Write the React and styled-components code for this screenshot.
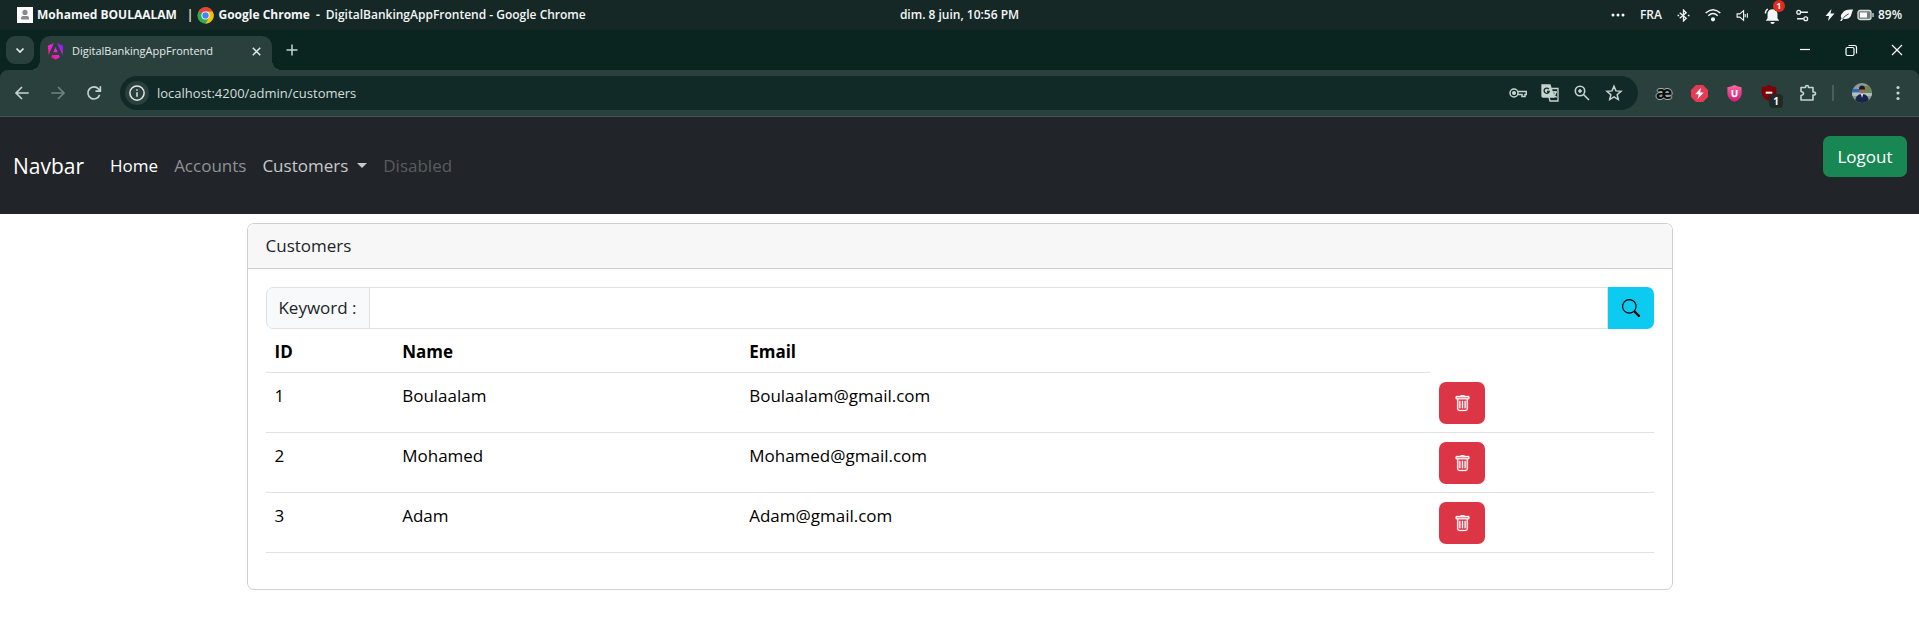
import React from 'react';
import styled, { createGlobalStyle, css } from 'styled-components';
import { BsSearch, BsTrash } from 'react-icons/bs';

const Global = createGlobalStyle`
  *, *::before, *::after { box-sizing: border-box; }
  body {
    margin: 0;
    background: #fff;
    color: #212529;
    font-family: "Open Sans", "Noto Sans", sans-serif;
    font-size: 17px;
    line-height: 26px;
  }
  button, input { font: inherit; }
  svg { display: block; flex: none; }
`;

const Row = css`
  display: flex;
  align-items: center;
`;

/* ---------- desktop status bar ---------- */

const StatusBar = styled.header`
  display: grid;
  grid-template-columns: 1fr auto 1fr;
  align-items: center;
  height: 30px;
  padding: 0 17px;
  background: #152826;
  color: #f4f6f6;
  font-size: 12px;
  font-weight: 600;
  line-height: 16px;
  white-space: nowrap;
`;

const StatusLeft = styled.div`
  ${Row}
  gap: 4px;
`;

const StatusTitle = styled.span`
  margin-right: ${(p) => (p.$wide ? 6 : 2)}px;
  font-weight: 700;
`;

const StatusRight = styled.div`
  ${Row}
  justify-content: flex-end;
  gap: 15px;
`;

const Battery = styled.div`
  ${Row}
  gap: 4px;
`;

const BellWrap = styled.span`
  position: relative;
`;

const BellBadge = styled.span`
  position: absolute;
  top: -7px;
  right: -4px;
  width: 12px;
  height: 12px;
  border-radius: 50%;
  background: #e02b20;
  font-size: 9px;
  font-weight: 700;
  line-height: 12px;
  text-align: center;
`;

/* ---------- browser tabs ---------- */

const TabStrip = styled.div`
  display: flex;
  align-items: flex-end;
  height: 40px;
  padding: 0 14px 0 6px;
  background: #0a2420;
`;

const TabSearch = styled.button`
  ${Row}
  justify-content: center;
  width: 28px;
  height: 28px;
  margin: 0 6px 6px 0;
  padding: 0;
  border: 0;
  border-radius: 9px;
  background: #29403c;
  color: #e3ebe9;
`;

const Tab = styled.div`
  ${Row}
  position: relative;
  width: 232px;
  height: 34px;
  padding: 0 11px 4px 7px;
  border-radius: 10px 10px 0 0;
  background: #29403c;
  color: #e3ebe9;
  font-size: 11px;
  line-height: 16px;
  &::before, &::after {
    content: "";
    position: absolute;
    bottom: 0;
    width: 10px;
    height: 10px;
  }
  &::before { left: -10px; background: radial-gradient(circle at 0 0, transparent 10px, #29403c 10px); }
  &::after { right: -10px; background: radial-gradient(circle at 100% 0, transparent 10px, #29403c 10px); }
`;

const TabTitle = styled.span`
  flex: 1;
  margin-left: 8px;
`;

const IconButton = styled.button`
  ${Row}
  justify-content: center;
  flex: none;
  width: ${(p) => p.$size || 16}px;
  height: ${(p) => p.$size || 16}px;
  padding: 0;
  border: 0;
  background: none;
  color: ${(p) => p.$color || '#c6d4d0'};
  opacity: ${(p) => (p.disabled ? 0.45 : 1)};
`;

const NewTab = styled.div`
  margin: 0 auto 12px 12px;
`;

const WindowControls = styled.div`
  ${Row}
  gap: 30px;
  margin-bottom: 12px;
`;

/* ---------- browser toolbar ---------- */

const ToolbarBacking = styled.div`
  background: #0a2420;
`;

const Toolbar = styled.div`
  ${Row}
  height: 47px;
  padding: 0 13px;
  border-bottom: 1px solid #4a5351;
  border-radius: 8px 8px 0 0;
  background: #29403c;
`;

const History = styled.div`
  ${Row}
  gap: 18px;
  margin-right: 17px;
`;

const AddressBar = styled.div`
  ${Row}
  flex: 1;
  height: 34px;
  padding: 0 15px 0 5px;
  border-radius: 17px;
  background: #122a27;
`;

const SiteInfo = styled.button`
  ${Row}
  justify-content: center;
  width: 24px;
  height: 24px;
  padding: 0;
  border: 0;
  border-radius: 50%;
  background: #29403c;
  color: #dfe8e6;
`;

const Url = styled.input`
  flex: 1;
  min-width: 0;
  height: 24px;
  padding: 0;
  margin-left: 8px;
  border: 0;
  outline: 0;
  background: none;
  color: #d5dedc;
  font-size: 13px;
`;

const AddressActions = styled.div`
  ${Row}
  gap: 14px;
`;

const Extensions = styled.div`
  ${Row}
  gap: 18px;
  margin-left: 17px;
`;

const Shield = styled.span`
  position: relative;
  width: 20px;
`;

const CountBadge = styled.span`
  position: absolute;
  left: 8px;
  top: 9px;
  width: 14px;
  height: 14px;
  border-radius: 4px;
  background: #202b29;
  color: #fff;
  font-size: 10px;
  font-weight: 700;
  line-height: 14px;
  text-align: center;
`;

const Divider = styled.span`
  width: 2px;
  height: 16px;
  margin-left: -3px;
  background: #46605b;
`;

/* ---------- application ---------- */

const Navbar = styled.nav`
  display: flex;
  align-items: center;
  min-height: 97px;
  padding: 9px 12px 9px 13px;
  background: #212529;
`;

const Brand = styled.a`
  margin-right: 18px;
  color: #fff;
  font-size: 21px;
  line-height: 32px;
  text-decoration: none;
`;

const NavList = styled.ul`
  ${Row}
  margin: 0;
  padding: 0;
  list-style: none;
`;

const NavLink = styled.a`
  ${Row}
  padding: 9px 8px;
  color: ${(p) => p.$color};
  text-decoration: none;
`;

const Caret = styled.span`
  margin-left: 9px;
  border-top: 5px solid;
  border-right: 5px solid transparent;
  border-left: 5px solid transparent;
`;

const Button = styled.button`
  ${Row}
  justify-content: center;
  min-width: ${(p) => (p.$icon ? 46 : 84)}px;
  height: ${(p) => (p.$icon ? 42 : 41)}px;
  padding: 0;
  border: 0;
  border-radius: ${(p) => (p.$attached ? '0 7px 7px 0' : '7px')};
  background: ${(p) => p.$bg};
  color: ${(p) => p.$color || '#fff'};
`;

const LogoutSlot = styled.div`
  align-self: flex-start;
  margin: 10px 0 0 auto;
`;

const Container = styled.main`
  max-width: 1452px;
  margin: 9px auto 0;
  padding: 0 13px;
`;

const Card = styled.section`
  border: 1px solid #cfd0d1;
  border-radius: 7px;
  background: #fff;
  overflow: hidden;
`;

const CardHeader = styled.div`
  padding: 9px 18px;
  border-bottom: 1px solid #cfd0d1;
  background: #f7f7f7;
`;

const CardBody = styled.div`
  padding: 18px;
`;

const InputGroup = styled.form`
  display: flex;
`;

const InputLabel = styled.label`
  ${Row}
  justify-content: center;
  width: 104px;
  border: 1px solid #dee2e6;
  border-radius: 7px 0 0 7px;
  background: #f8f9fa;
`;

const TextInput = styled.input`
  flex: 1;
  min-width: 0;
  margin-left: -1px;
  padding: 0 13px;
  border: 1px solid #dee2e6;
  outline: 0;
`;

const Table = styled.table`
  width: 100%;
  margin-bottom: 18px;
  border-collapse: separate;
  border-spacing: 0;
  table-layout: fixed;
  color: #000;
  line-height: 28px;
`;

const Column = styled.col`
  width: ${(p) => p.$share};
`;

const cell = css`
  padding: 9px 9px 8px;
  border-bottom: 1px solid #dee2e6;
  text-align: left;
  vertical-align: top;
`;

const HeadCell = styled.th`
  ${cell}
  padding-bottom: 6px;
  font-weight: 700;
`;

const Cell = styled.td`
  ${cell}
`;

/* ---------- icons ---------- */

const Icon = ({ size = 16, box = 24, children, fill = 'none', w = 2, ...rest }) => (
  <svg
    width={size} height={size} viewBox={`0 0 ${box} ${box}`} fill={fill}
    stroke={fill === 'none' ? 'currentColor' : 'none'} strokeWidth={w} aria-hidden="true" {...rest}
  >
    {children}
  </svg>
);

const UserTile = () => (
  <Icon size={16} box={16} fill="#8a8a8a">
    <rect width="16" height="16" fill="#fff" />
    <circle cx="8" cy="5.4" r="2.6" />
    <path d="M4 12.5V11q0-2 2-2h4q2 0 2 2v1.500z" />
  </Icon>
);

const ChromeLogo = () => (
  <Icon size={17} box={48} fill="#fff">
    <circle cx="24" cy="24" r="23" fill="#34a853" />
    <path d="M24 24 4.100 12.500A23 23 0 0 1 43.900 12.500L24 13z" fill="#ea4335" />
    <path d="M24 1A23 23 0 0 1 44 12.500H24z" fill="#ea4335" />
    <path d="M44 12.500A23 23 0 0 1 24 47L34 30 24 12.500z" fill="#fbbc04" />
    <circle cx="24" cy="24" r="11.500" />
    <circle cx="24" cy="24" r="9" fill="#4285f4" />
  </Icon>
);

const AngularLogo = () => (
  <Icon size={17} box={24} fill="#f0c">
    <defs>
      <linearGradient id="angular" x1="0" y1="1" x2="1" y2="0">
        <stop offset="0" stopColor="#ff0a5c" />
        <stop offset=".5" stopColor="#f024d8" />
        <stop offset="1" stopColor="#6a1bff" />
      </linearGradient>
    </defs>
    <path fill="url(#angular)" d="M14.200 0 22.800 4l-.9 13.400zM9.800 0 1.200 4l.9 13.400zM18 20l-6 3.800L6 20l1.200-3h9.600zM8.800 13.200 12 5.500l3.200 7.700z" />
  </Icon>
);

const Chevron = () => <Icon size={12} w={3.5}><path d="m5 9 7 7 7-7" /></Icon>;
const Close = () => <Icon size={9} w={4}><path d="M2 2l20 20M22 2 2 22" /></Icon>;
const Plus = () => <Icon size={12} w={3}><path d="M12 1v22M1 12h22" /></Icon>;
const Back = () => <Icon size={18} w={2.2}><path d="M21 12H4M12 4l-8 8 8 8" /></Icon>;
const Forward = () => <Icon size={18} w={2.2}><path d="M3 12h17M12 4l8 8-8 8" /></Icon>;
const Reload = () => <Icon size={18} w={2.2}><path d="M19.500 14.500A8 8 0 1 1 18 6.700l2 2.300M20.500 3v6.500H14" /></Icon>;
const Info = () => <Icon size={18} w={2}><circle cx="12" cy="12" r="9.5" /><path d="M12 11v6M12 7v2" /></Icon>;

const MoreDots = () => (
  <Icon size={14} box={14} fill="currentColor"><circle cx="2" cy="7" r="1.5" /><circle cx="7" cy="7" r="1.5" /><circle cx="12" cy="7" r="1.5" /></Icon>
);
const Bluetooth = () => (
  <Icon size={13} w={2.4}><path d="M5 7l12 10-5 5V2l5 5L5 17" /><path d="M1 12h3M20 12h3" /></Icon>
);
const Wifi = () => (
  <Icon size={16} w={2.2}><path d="M1 9q11-10 22 0M5 13q7-6.500 14 0" /><circle cx="12" cy="18.500" r="2" fill="currentColor" /></Icon>
);
const Speaker = () => <Icon size={13} w={2}><path d="M2 9h5l7-6v18l-7-6H2zM17 9v6M21 8v8" /></Icon>;
const Bell = () => (
  <Icon size={17} fill="currentColor"><path d="M12 3a7 7 0 0 0-7 7v6l-2.500 3.500h19L19 16v-6a7 7 0 0 0-7-7zM9 21a3 3 0 0 0 6 0zM1 9q0-5 4-7l1 1.500Q3 5 3 9z" /></Icon>
);
const Sliders = () => <Icon size={13} w={2.4}><circle cx="5" cy="6" r="3.5" /><path d="M9 6h13M2 18h12" /><circle cx="18" cy="18" r="3.5" /></Icon>;
const Bolt = () => <Icon size={12} fill="currentColor"><path d="M15 0 3 14h7L8 24 21 9h-8z" /></Icon>;
const Leaf = () => <Icon size={13} fill="currentColor"><path d="M24 1Q9 0 5 7-1 12 3 17l-3 5h3l3-4q10 2 14-5 2-6 4-12z" /><path d="M5 18q4-6 11-9" stroke="#152826" strokeWidth="1.500" /></Icon>;
const BatteryIcon = () => (
  <svg width="17" height="12" viewBox="0 0 17 12" aria-hidden="true">
    <rect x="1" y="1.5" width="13" height="9" rx="2" fill="#6f7c7a" stroke="#d9dfde" strokeWidth="1.3" />
    <rect x="3" y="3.5" width="7" height="5" fill="#fff" />
    <path d="M16 4v4" stroke="#d9dfde" strokeWidth="1.3" />
  </svg>
);
const Restore = () => <Icon size={16} box={16} w={1.2}><rect x="3" y="5.5" width="8" height="8" rx="1.5" /><path d="M5.500 3.500h6q2 0 2 2v6" /></Icon>;
const Minimize = () => <Icon size={16} box={16} w={1.2}><path d="M3 7.500h10" /></Icon>;
const WinClose = () => <Icon size={16} box={16} w={1.2}><path d="m3 3 10 10M13 3 3 13" /></Icon>;
const Key = () => (
  <Icon size={18} box={18} w={1.5}><circle cx="5" cy="9" r="4" /><circle cx="5" cy="9" r="1.3" fill="currentColor" /><path d="M9 7.500h8.300v3H16v2h-3v-2H9" /></Icon>
);
const Translate = () => (
  <Icon size={18} box={18} w={1.3}>
    <path d="M1 1h8l4 12H2q-1 0-1-1z" fill="#c6d4d0" />
    <path d="M10.500 4.500H17v12.500H9l-1-4" />
    <path d="M7.800 5.200a2.600 2.600 0 1 0 .4 2.300H6" stroke="#122a27" />
    <path d="M11.500 8h4.500M13.800 7v1M15 8q-1 4-3 5.500M12.500 9.500l3 4" />
  </Icon>
);
const ZoomIn = () => <Icon size={18} box={18} w={1.6}><circle cx="7" cy="7" r="4.7" /><path d="m10.500 10.500 5.500 5.500M7 5v4M5 7h4" /></Icon>;
const Star = () => <Icon size={18} w={2}><path d="m12 3 2.600 6.200 6.700.6-5.100 4.400 1.500 6.500L12 17.200l-5.700 3.500 1.500-6.500-5.100-4.400 6.700-.6z" /></Icon>;
const Puzzle = () => (
  <Icon size={18} box={18} w={1.6} strokeLinejoin="round">
    <path d="M2 3.500h4.500V3q0-1.500 1.500-1.500T9.500 3v.5H14V8h.5Q16.500 8 16.500 9.500T14.500 11H14v5H2v-4.500q2.500-.5 2.500-2T2 7.500z" />
  </Icon>
);
const RedBolt = () => (
  <Icon size={17} box={24} fill="#fff"><path d="M7 0h10l7 7v10l-7 7H7l-7-7V7z" fill="#e93a55" /><path d="M14 4 6 13h5l-2 7 9-9.500h-5z" /></Icon>
);
const PinkShield = () => (
  <Icon size={17} box={24}>
    <defs>
      <linearGradient id="pink" x1="0" y1="0" x2="0" y2="1">
        <stop offset="0" stopColor="#ff6a9e" />
        <stop offset="1" stopColor="#d3157a" />
      </linearGradient>
    </defs>
    <path d="M12 0q5 3 10 3v9q0 8-10 12Q2 20 2 12V3q5 0 10-3z" fill="url(#pink)" stroke="none" />
    <path d="M9 7v6q0 3 3 3t3-3V7" stroke="#fff" strokeWidth="2.5" />
  </Icon>
);
const RedShield = () => (
  <Icon size={16} box={24} fill="#fff"><path d="M12 0q5 3 11 3v8q0 9-11 13Q1 20 1 11V3q6 0 11-3z" fill="#800008" /><path d="M7 10h10v3H7z" /></Icon>
);
const Avatar = () => (
  <Icon size={20} box={20} fill="#fff">
    <defs><clipPath id="face"><circle cx="10" cy="10" r="10" /></clipPath></defs>
    <g clipPath="url(#face)">
      <path d="M0 0h20v20H0z" fill="#8d9b98" />
      <path d="M0 6h8v3H0z" fill="#2469c4" />
      <path d="M12 3h8v7h-8z" fill="#718350" />
      <path d="M0 10h20v3H0z" fill="#b5bdc4" />
      <path d="M3 20q0-9 7-9t7 9z" fill="#17254b" />
      <circle cx="10" cy="7.5" r="2.7" fill="#9a6c54" />
      <path d="M7 6.500q0-4 3-4t3 4z" fill="#1e1a1c" />
      <path d="m9 11 1 4 1-4z" />
    </g>
  </Icon>
);
const MenuDots = () => (
  <Icon size={16} box={16} fill="currentColor"><circle cx="8" cy="2.5" r="1.6" /><circle cx="8" cy="8" r="1.6" /><circle cx="8" cy="13.5" r="1.6" /></Icon>
);
const LigatureMark = styled.span`
  width: 18px;
  margin-top: -3px;
  color: #0b0f0e;
  font-size: 18px;
  font-weight: 700;
  line-height: 18px;
  text-align: center;
  text-shadow: 1px 0 #a3afac, -1px 0 #a3afac, 0 1px #a3afac, 0 -1px #a3afac;
`;

/* ---------- data ---------- */

const customers = [
  { id: 1, name: 'Boulaalam', email: 'Boulaalam@gmail.com' },
  { id: 2, name: 'Mohamed', email: 'Mohamed@gmail.com' },
  { id: 3, name: 'Adam', email: 'Adam@gmail.com' },
];

export default function App() {
  return (
    <>
      <Global />
      <StatusBar>
        <StatusLeft>
          <UserTile />
          <StatusTitle $wide>Mohamed BOULAALAM</StatusTitle>
          <span>|</span>
          <ChromeLogo />
          <StatusTitle>Google Chrome</StatusTitle>
          <StatusTitle>-</StatusTitle>
          <span>DigitalBankingAppFrontend - Google Chrome</span>
        </StatusLeft>
        <span>dim. 8 juin, 10:56 PM</span>
        <StatusRight>
          <MoreDots />
          <span>FRA</span>
          <Bluetooth />
          <Wifi />
          <Speaker />
          <BellWrap><Bell /><BellBadge>1</BellBadge></BellWrap>
          <Sliders />
          <Battery><Bolt /><Leaf /><BatteryIcon /><span>89%</span></Battery>
        </StatusRight>
      </StatusBar>

      <TabStrip>
        <TabSearch aria-label="Search tabs"><Chevron /></TabSearch>
        <Tab>
          <AngularLogo />
          <TabTitle>DigitalBankingAppFrontend</TabTitle>
          <IconButton $size={10} $color="#e3ebe9" aria-label="Close tab"><Close /></IconButton>
        </Tab>
        <NewTab><IconButton aria-label="New tab"><Plus /></IconButton></NewTab>
        <WindowControls>
          <IconButton $color="#fff" aria-label="Minimize"><Minimize /></IconButton>
          <IconButton $color="#fff" aria-label="Restore"><Restore /></IconButton>
          <IconButton $color="#fff" aria-label="Close window"><WinClose /></IconButton>
        </WindowControls>
      </TabStrip>

      <ToolbarBacking>
        <Toolbar>
          <History>
            <IconButton $size={18} aria-label="Back"><Back /></IconButton>
            <IconButton $size={18} disabled aria-label="Forward"><Forward /></IconButton>
            <IconButton $size={18} aria-label="Reload"><Reload /></IconButton>
          </History>
          <AddressBar>
            <SiteInfo aria-label="Site information"><Info /></SiteInfo>
            <Url aria-label="Address" defaultValue="localhost:4200/admin/customers" />
            <AddressActions>
              <IconButton $size={18} aria-label="Passwords"><Key /></IconButton>
              <IconButton $size={18} aria-label="Translate"><Translate /></IconButton>
              <IconButton $size={18} aria-label="Zoom"><ZoomIn /></IconButton>
              <IconButton $size={18} aria-label="Bookmark"><Star /></IconButton>
            </AddressActions>
          </AddressBar>
          <Extensions>
            <LigatureMark>æ</LigatureMark>
            <RedBolt />
            <PinkShield />
            <Shield><RedShield /><CountBadge>1</CountBadge></Shield>
            <IconButton $size={18} aria-label="Extensions"><Puzzle /></IconButton>
            <Divider />
            <Avatar />
            <IconButton aria-label="Menu"><MenuDots /></IconButton>
          </Extensions>
        </Toolbar>
      </ToolbarBacking>

      <Navbar>
        <Brand href="#">Navbar</Brand>
        <NavList>
          <li><NavLink href="#" $color="#fff">Home</NavLink></li>
          <li><NavLink href="#" $color="#909294">Accounts</NavLink></li>
          <li><NavLink href="#" $color="#c8c9ca">Customers<Caret /></NavLink></li>
          <li><NavLink href="#" aria-disabled="true" $color="#595c5f">Disabled</NavLink></li>
        </NavList>
        <LogoutSlot><Button $bg="#198754">Logout</Button></LogoutSlot>
      </Navbar>

      <Container>
        <Card>
          <CardHeader>Customers</CardHeader>
          <CardBody>
            <InputGroup onSubmit={(e) => e.preventDefault()}>
              <InputLabel htmlFor="keyword">Keyword :</InputLabel>
              <TextInput id="keyword" type="text" />
              <Button $icon $attached $bg="#0dcaf0" $color="#000" aria-label="Search"><BsSearch size={18} /></Button>
            </InputGroup>
            <Table>
              <colgroup>
                <Column $share="9.2%" />
                <Column $share="25%" />
                <Column $share="49.7%" />
                <Column $share="16.1%" />
              </colgroup>
              <thead>
                <tr><HeadCell>ID</HeadCell><HeadCell>Name</HeadCell><HeadCell>Email</HeadCell></tr>
              </thead>
              <tbody>
                {customers.map((c) => (
                  <tr key={c.id}>
                    <Cell>{c.id}</Cell>
                    <Cell>{c.name}</Cell>
                    <Cell>{c.email}</Cell>
                    <Cell><Button $icon $bg="#dc3545" aria-label={`Delete ${c.name}`}><BsTrash size={17} strokeWidth={0.3} /></Button></Cell>
                  </tr>
                ))}
              </tbody>
            </Table>
          </CardBody>
        </Card>
      </Container>
    </>
  );
}
